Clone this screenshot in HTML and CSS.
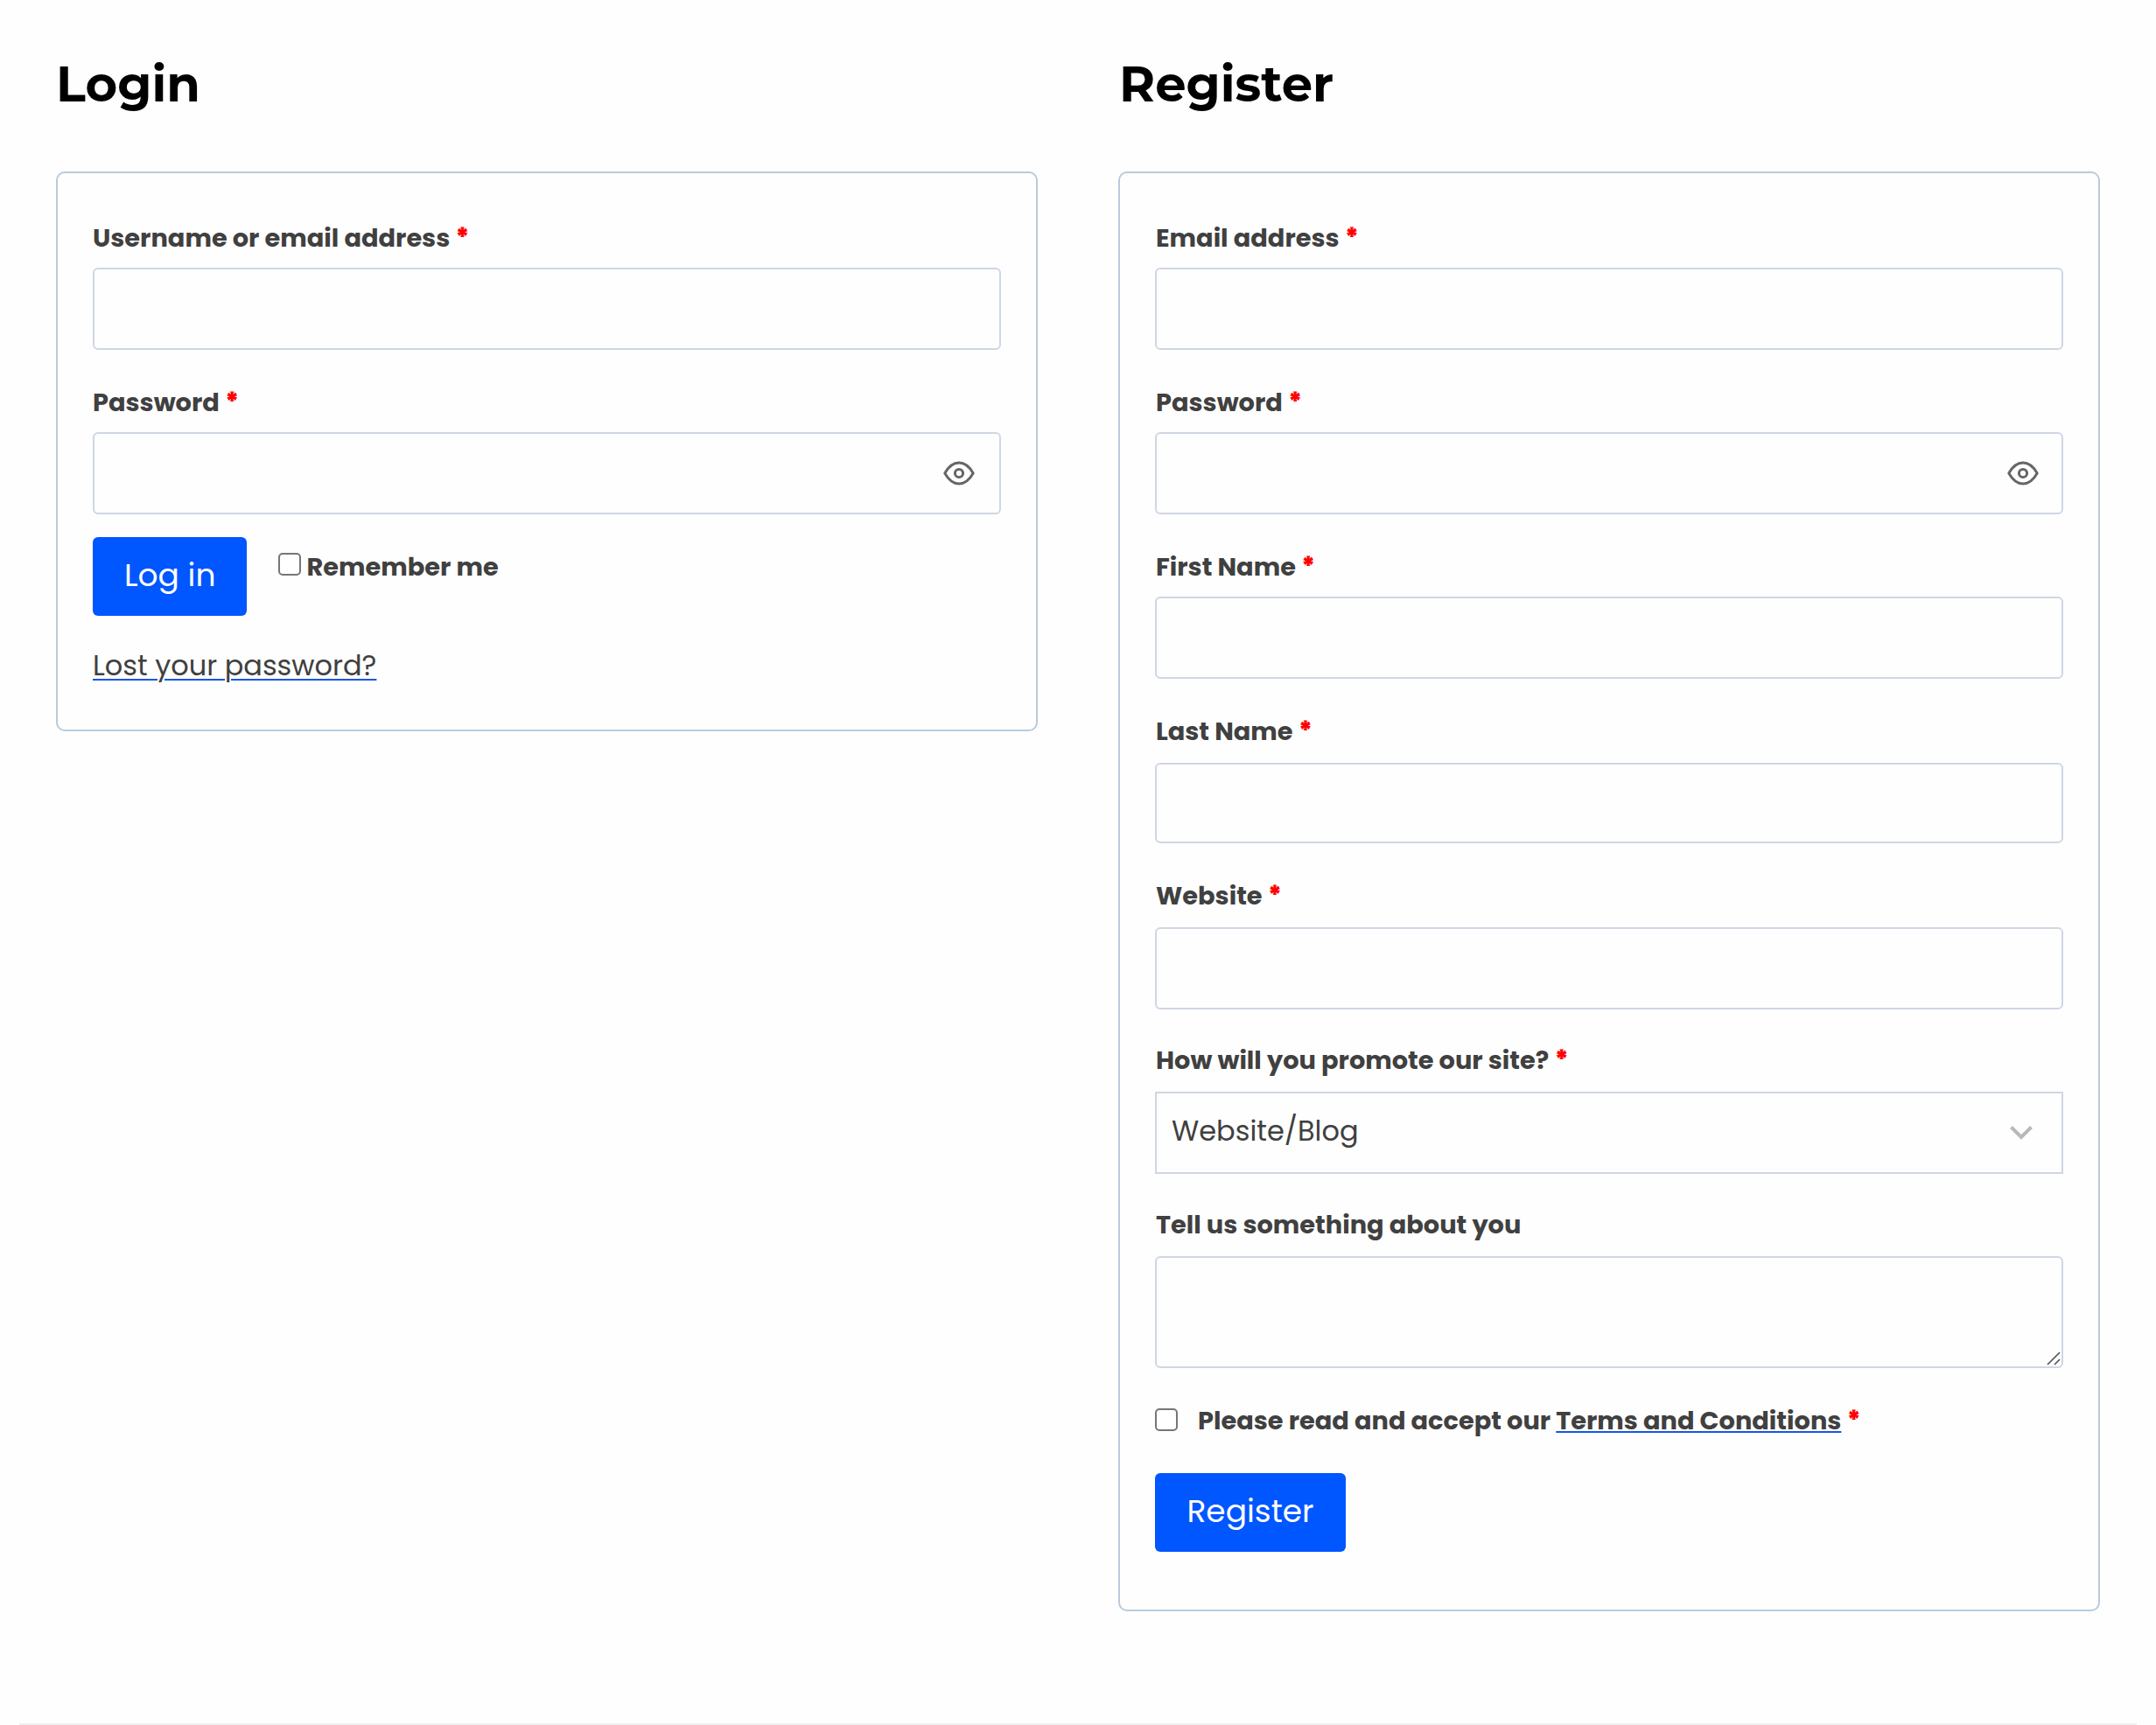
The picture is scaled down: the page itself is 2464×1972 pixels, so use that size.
FILE: index.html
```
<!DOCTYPE html>
<html lang="en">
<head>
  <meta charset="UTF-8">
  <meta name="viewport" content="width=device-width, initial-scale=1.0">
  <title>Login / Register</title>
  <link rel="stylesheet" href="styles.css">
</head>
<body>

  <div class="account">
    <section class="column">
      <h2>Login</h2>
      <form class="card login">
        <div class="field">
          <label for="username">Username or email address <span class="required">*</span></label>
          <input type="text" id="username" name="username">
        </div>
        <div class="field">
          <label for="password">Password <span class="required">*</span></label>
          <div class="input-wrap">
            <input type="password" id="password" name="password">
            <svg class="eye" viewBox="0 0 36 28" fill="none" stroke="#666" stroke-width="3">
              <path d="M1.8 14C6 6.5 11.5 2 18 2s12 4.5 16.2 12C30 21.5 24.5 26 18 26S6 21.5 1.8 14z" stroke-linejoin="round"/>
              <circle cx="18" cy="14" r="4.6"/>
            </svg>
          </div>
        </div>
        <div class="login-row">
          <button type="button" class="btn">Log in</button>
          <label class="remember"><input type="checkbox" name="remember"><span>Remember me</span></label>
        </div>
        <p class="lost"><a href="#">Lost your password?</a></p>
      </form>
    </section>

    <section class="column column-register">
      <h2>Register</h2>
      <form class="card register">
        <div class="field">
          <label for="email">Email address <span class="required">*</span></label>
          <input type="email" id="email" name="email">
        </div>
        <div class="field">
          <label for="reg-password">Password <span class="required">*</span></label>
          <div class="input-wrap">
            <input type="password" id="reg-password" name="reg-password">
            <svg class="eye" viewBox="0 0 36 28" fill="none" stroke="#666" stroke-width="3">
              <path d="M1.8 14C6 6.5 11.5 2 18 2s12 4.5 16.2 12C30 21.5 24.5 26 18 26S6 21.5 1.8 14z" stroke-linejoin="round"/>
              <circle cx="18" cy="14" r="4.6"/>
            </svg>
          </div>
        </div>
        <div class="field">
          <label for="first-name">First Name <span class="required">*</span></label>
          <input type="text" id="first-name" name="first-name">
        </div>
        <div class="field field-low field-last-name">
          <label for="last-name">Last Name <span class="required">*</span></label>
          <input type="text" id="last-name" name="last-name">
        </div>
        <div class="field field-low">
          <label for="website">Website <span class="required">*</span></label>
          <input type="text" id="website" name="website">
        </div>
        <div class="field field-low">
          <label for="promote">How will you promote our site? <span class="required">*</span></label>
          <div class="input-wrap">
            <select id="promote" name="promote">
              <option>Website/Blog</option>
            </select>
            <svg class="chevron" viewBox="0 0 26 16" fill="none" stroke="#b8b8b8" stroke-width="4">
              <path d="M1.5 1.5L13 13L24.5 1.5"/>
            </svg>
          </div>
        </div>
        <div class="field field-low field-about">
          <label for="about">Tell us something about you</label>
          <div class="input-wrap">
            <textarea id="about" name="about"></textarea>
            <svg class="grip" viewBox="0 0 16 16" stroke="#555" stroke-width="1.7">
              <path d="M1 15L15 1M9 15L15 9"/>
            </svg>
          </div>
        </div>
        <label class="terms">
          <input type="checkbox" name="terms">
          <span>Please read and accept our <a href="#">Terms and Conditions</a> <span class="required">*</span></span>
        </label>
        <button type="button" class="btn btn-register">Register</button>
      </form>
    </section>
  </div>

  <div class="page-end"></div>

</body>
</html>
```
FILE: styles.css
```
* {
  box-sizing: border-box;
}
body {
  margin: 0;
  height: 1972px;
  display: flex;
  flex-direction: column;
  justify-content: space-between;
  font-family: Poppins, Inter, sans-serif;
  color: #404040;
  background-color: #fefefe;
}
.account {
  display: grid;
  grid-template-columns: 1fr 1fr;
  gap: 92px;
  align-items: start;
  padding: 61px 64px 0;
}
h2 {
  margin: 0 0 65px;
  font-family: Montserrat, Inter, sans-serif;
  font-size: 56px;
  font-weight: 700;
  line-height: 70px;
  color: #000;
}
.card {
  padding: 54px 40px 49px;
  border: 2px solid #b9cbdc;
  border-radius: 10px;
}
.register {
  padding-bottom: 66px;
}
.field {
  margin-bottom: 40px;
}
label {
  display: block;
  font-size: 28.8px;
  font-weight: 700;
  line-height: 40px;
}
.field label {
  height: 54px;
}
.field-low {
  margin-bottom: 38px;
}
.field-low label {
  height: 56px;
}
.column-register h2, .register .field label {
  padding-left: 1px;
}
.required {
  font-weight: 900;
  color: #f00;
}
.field input, select, textarea {
  display: block;
  width: 100%;
  height: 94px;
  margin: 0;
  padding: 0 17px;
  font-family: inherit;
  font-size: 32px;
  color: #404040;
  background-color: #fefefe;
  border: 2px solid #cfd6e4;
  border-radius: 6px;
  outline: none;
}
.field-last-name {
  margin-bottom: 40px;
}
.field-last-name input {
  height: 92px;
}
.input-wrap {
  position: relative;
}
select {
  appearance: none;
  padding-bottom: 6px;
  border-radius: 0;
}
textarea {
  height: 128px;
  resize: none;
}
.eye {
  position: absolute;
  top: 32.5px;
  right: 30px;
  width: 36px;
  height: 28px;
}
.register .eye {
  right: 28px;
}
.chevron {
  position: absolute;
  top: 39px;
  right: 35px;
  width: 26px;
  height: 16px;
}
.grip {
  position: absolute;
  right: 3px;
  bottom: 3px;
  width: 16px;
  height: 16px;
}
input[type="checkbox"] {
  appearance: none;
  flex: none;
  width: 26px;
  height: 26px;
  margin: 0;
  border: 2px solid #767676;
  border-radius: 5px;
  background-color: #fff;
}
.btn {
  display: block;
  height: 90px;
  padding: 0 36px 3px;
  font-family: inherit;
  font-size: 36px;
  line-height: 87px;
  color: #fff;
  background-color: #0056ff;
  border: none;
  border-radius: 6px;
  cursor: pointer;
}
.btn-register {
  width: 218px;
}
.login .field:nth-child(2) {
  margin-bottom: 26px;
}
.login-row {
  display: flex;
  gap: 36px;
}
.remember {
  display: flex;
  gap: 6px;
  padding-top: 14px;
}
.remember input {
  margin-top: 4px;
}
a {
  color: inherit;
  text-decoration: underline 2px #1558e0;
  text-underline-offset: 4px;
}
.lost {
  margin: 32px 0 0;
  font-size: 32px;
  line-height: 49px;
}
.field-about {
  margin-bottom: 40px;
}
.terms {
  display: flex;
  gap: 23px;
  margin-bottom: 40px;
}
.terms input {
  margin-top: 6px;
}
.terms a {
  text-underline-offset: 2px;
}
.page-end {
  height: 2px;
  margin: 0 22px;
  background-color: #efefef;
}
```
